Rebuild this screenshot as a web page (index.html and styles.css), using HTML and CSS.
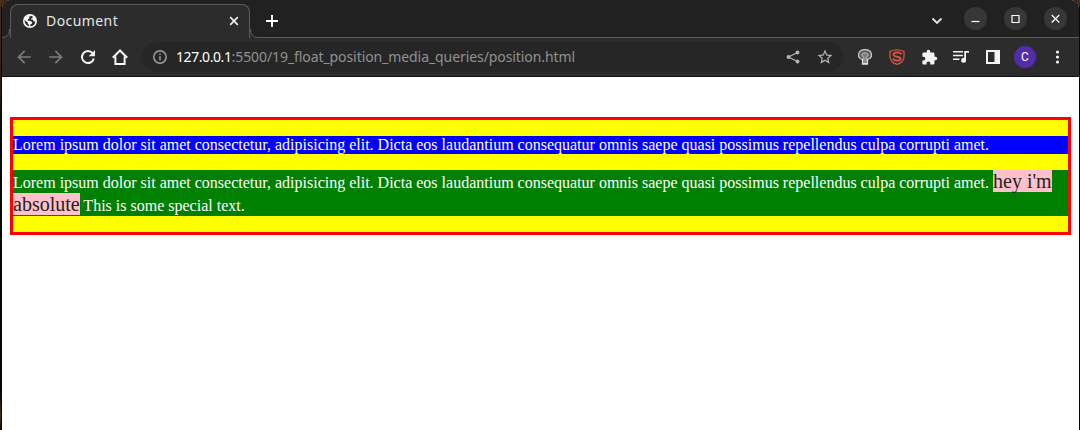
FILE: index.html
```html
<!DOCTYPE html>
<html lang="en">
<head>
<meta charset="utf-8">
<title>Document</title>
<link rel="stylesheet" href="styles.css">
</head>
<body>
<div class="window">
  <header class="tabstrip">
    <svg class="flare" viewBox="0 0 8 38"><path class="flare-fill" d="M0 38V37.500Q7.500 37.500 7.500 29H8V38Z"/><path class="flare-line" d="M0 37.500Q7.500 37.500 7.500 29"/></svg>
    <div class="tab">
      <svg class="globe" viewBox="0 0 14 14"><circle cx="7" cy="7" r="7" fill="#f8f9fa"/><path d="M8 1.800 6 3 6.500 4.300 5 5.500 4.700 6.800 7.600 6.900 9.200 8.200 8.900 9.700 7.600 10 7.200 12.300A5.400 5.400 0 0 0 12.300 7.500L10.600 7.200 9.800 5.600 8 5.600 8.200 4.500 9.600 3.900 9.700 2.400ZM1.700 6.100 4.800 8.700 4.900 10 6 10.700 6 12.300A5.400 5.400 0 0 1 1.700 6.100Z" fill="#2c2c2c"/></svg>
      <span class="tab-title">Document</span>
      <svg class="tab-close" viewBox="0 0 10 10"><path d="M1.200 1.200 8.800 8.800M8.800 1.200 1.200 8.800"/></svg>
    </div>
    <svg class="flare" viewBox="0 0 8 38"><path class="flare-fill" d="M8 38V37.500Q.5 37.500 .5 29H0V38Z"/><path class="flare-line" d="M8 37.500Q.5 37.500 .5 29"/></svg>
    <div class="strip-rest">
      <svg class="new-tab" viewBox="0 0 12 12"><path d="M6 0V12M0 6H12"/></svg>
      <svg class="chevron" viewBox="0 0 12 8"><path d="M1.500 1.500 6 6 10.500 1.500"/></svg>
      <div class="controls">
        <span class="control"><svg viewBox="0 0 23 23"><path d="M7.500 14.500H15.500"/></svg></span>
        <span class="control"><svg viewBox="0 0 23 23"><path d="M8 8.500H15V15.500H8Z"/></svg></span>
        <span class="control"><svg viewBox="0 0 23 23"><path d="M7.700 8 15.300 15.500M15.300 8 7.700 15.500"/></svg></span>
      </div>
    </div>
  </header>
  <nav class="toolbar">
    <span class="cell dim"><svg viewBox="0 0 24 24"><path d="M20 11H7.830l5.590-5.590L12 4l-8 8 8 8 1.410-1.410L7.830 13H20v-2z"/></svg></span>
    <span class="cell dim"><svg viewBox="0 0 24 24"><path d="M12 4l-1.410 1.410L16.170 11H4v2h12.170l-5.580 5.590L12 20l8-8z"/></svg></span>
    <span class="cell"><svg viewBox="0 0 16 16"><path class="stroke" d="M12.600 4.200A6 6 0 1 0 13.800 9.500"/><path d="M15 1V7.300H8.700Z"/></svg></span>
    <span class="cell"><svg viewBox="0 0 16 16"><path class="stroke" d="M3.400 7.500V15H12.600V7.500M.8 8.800 8 1.500 15.200 8.800"/></svg></span>
    <div class="address">
      <svg class="info" viewBox="0 0 14 14"><circle cx="7" cy="7" r="6.200"/><path d="M7 6.200V10.300M7 3.500V5"/></svg>
      <span class="url"><b>127.0.0.1</b>:5500/19_float_position_media_queries/position.html</span>
      <svg class="share" viewBox="0 0 14 14"><path d="M11.500 2.500 2.500 7 11.500 11.500"/><circle cx="11.500" cy="2.500" r="1.900"/><circle cx="2.500" cy="7" r="1.900"/><circle cx="11.500" cy="11.500" r="1.900"/></svg>
      <svg class="star" viewBox="0 0 24 24"><path d="M22 9.240l-7.190-.62L12 2 9.190 8.630 2 9.240l5.460 4.730L5.820 21 12 17.270 18.180 21l-1.630-7.030L22 9.240zM12 15.400l-3.760 2.270 1-4.280-3.320-2.880 4.380-.38L12 6.100l1.710 4.040 4.380.38-3.320 2.880 1 4.280L12 15.400z"/></svg>
    </div>
    <span class="cell ext"><svg viewBox="0 0 16 16"><path d="M5.300 10.500C-.5 8.500 .5 .7 8 .7S16.500 8.500 10.700 10.500Z" fill="#5f5f5f" stroke="#cfcfcf" stroke-width="1.200"/><path d="M6.300 11V7.500C4 7 4.300 4 8 4S12 7 9.700 7.500V11Z" fill="#7a7a7a" stroke="#c4c4c4"/><path d="M4.900 10.200H6.500V14H9.500V10.200H11.100V15.800H4.900Z" fill="#e2e2e2"/><path d="M6.500 8H9.500V14H6.500Z" fill="#8c8c8c"/></svg></span>
    <span class="cell ext"><svg viewBox="0 0 16 16"><path d="M1 2.400Q8-.7 15 2.400V7.500C15 11.500 12 14.200 8 15.400 4 14.200 1 11.500 1 7.500Z" fill="none" stroke="#d65440" stroke-width="1.300"/><path d="M12.600 5.200C11 3 4.500 3 4.500 5.700 4.500 8.400 11.500 6.900 11.500 9.600 11.500 12.400 5.500 12.300 3.600 9.600" fill="none" stroke="#d65440" stroke-width="2"/></svg></span>
    <span class="cell puzzle"><svg viewBox="0 0 24 24"><path d="M20.500 11H19V7c0-1.100-.9-2-2-2h-4V3.500a2.500 2.500 0 0 0-5 0V5H4c-1.100 0-2 .9-2 2v3.800h1.500a2.700 2.700 0 0 1 0 5.400H2V20c0 1.100.9 2 2 2h3.800v-1.500a2.700 2.700 0 0 1 5.400 0V22H17c1.100 0 2-.9 2-2v-4h1.500a2.500 2.500 0 0 0 0-5z"/></svg></span>
    <span class="cell"><svg viewBox="0 0 16 16"><path d="M0 2H10V3.600H0ZM0 5.700H10V7.300H0ZM0 9.400H6.500V11H0ZM11.200 2H16V3.800H13V11.200A2.400 2.400 0 1 1 11.200 9Z"/></svg></span>
    <span class="cell"><svg viewBox="0 0 16 16"><path fill-rule="evenodd" d="M1 1H15V15H1ZM3 3V13H9.500V3Z"/></svg></span>
    <span class="cell"><span class="avatar">C</span></span>
    <span class="cell"><svg viewBox="0 0 16 16"><circle cx="8.500" cy="3" r="1.600"/><circle cx="8.500" cy="8" r="1.600"/><circle cx="8.500" cy="13" r="1.600"/></svg></span>
  </nav>
  <main class="page">
    <div class="box">
      <p class="first">Lorem ipsum dolor sit amet consectetur, adipisicing elit. Dicta eos laudantium consequatur omnis saepe quasi possimus repellendus culpa corrupti amet.</p>
      <p class="second">Lorem ipsum dolor sit amet consectetur, adipisicing elit. Dicta eos laudantium consequatur omnis saepe quasi possimus repellendus culpa corrupti amet. <span class="special">hey i'm absolute</span> This is some special text.</p>
    </div>
  </main>
</div>
</body>
</html>
```
FILE: styles.css
```css
* { box-sizing: border-box; }
body {
  margin: 0;
  height: 430px;
  padding: 0 1px 0 2px;
  overflow: hidden;
  background: linear-gradient(#4a2f1c, #2b1c12 90px, #090808 130px, #090808 395px, #50301a 415px, #100b08);
}
svg { display: block; flex: none; }
.window {
  height: 430px;
  display: flex;
  flex-direction: column;
  background: #fff;
  border-radius: 8px 8px 0 0;
  overflow: hidden;
  box-shadow: 0 0 0 1px #080808;
}
.tabstrip { display: flex; height: 38px; background: #212121; }
.flare { width: 8px; height: 38px; }
.flare-fill { fill: #2c2c2c; }
.flare-line { fill: none; stroke: #5c5c5c; }
.tab {
  width: 240px;
  margin-top: 4px;
  padding: 0 10px 0 12px;
  display: flex;
  align-items: center;
  background: #2c2c2c;
  border: 1px solid #5c5c5c;
  border-bottom: 0;
  border-radius: 8px 8px 0 0;
}
.globe { width: 14px; height: 14px; margin-top: -1px; }
.tab-title {
  margin: -2px 0 0 9px;
  flex: 1;
  font: 14px/20px "Noto Sans", sans-serif;
  letter-spacing: .42px;
  color: #e6e6e6;
}
.tab-close { width: 10px; height: 10px; margin-top: -1px; fill: none; stroke: #eee; stroke-width: 1.7; }
.strip-rest {
  flex: 1;
  display: flex;
  align-items: center;
  padding: 0 12px 0 8px;
  border-bottom: 1px solid #5c5c5c;
}
.new-tab { width: 12px; height: 12px; margin-top: 5px; fill: none; stroke: #fff; stroke-width: 2; }
.chevron { width: 12px; height: 8px; margin: 5px 21px 0 auto; fill: none; stroke: #e4e4e4; stroke-width: 1.8; }
.controls { display: flex; gap: 17px; height: 23px; margin-top: -1px; }
.control { width: 23px; height: 23px; border-radius: 50%; background: #373737; }
.control svg { width: 23px; height: 23px; fill: none; stroke: #fff; stroke-width: 1.2; }
.toolbar {
  display: flex;
  align-items: center;
  height: 39px;
  padding: 0 6px;
  background: #2c2c2c;
  border-bottom: 1px solid #111;
}
.cell { width: 32px; height: 32px; display: flex; align-items: center; justify-content: center; }
.cell svg { width: 16px; height: 16px; fill: #f5f5f5; }
.cell.dim svg { width: 20px; height: 20px; fill: #7c7c7c; }
.cell .stroke { fill: none; stroke: #f5f5f5; stroke-width: 2; }
.cell.puzzle svg { width: 17px; height: 17px; }
.cell.ext svg { width: 16px; height: 16px; }
.address {
  flex: 1;
  height: 30px;
  margin: 0 6px;
  padding: 0 9px 0 11px;
  display: flex;
  align-items: center;
  background: #262626;
  border-radius: 15px;
}
.info { width: 14px; height: 14px; fill: none; stroke: #989da2; stroke-width: 1.5; }
.url {
  margin-left: 9px;
  flex: 1;
  white-space: nowrap;
  font: 14px/20px "Noto Sans", sans-serif;
  letter-spacing: -.08px;
  color: #929292;
}
.url b { font-weight: 400; letter-spacing: -.42px; color: #fff; }
.share { width: 14px; height: 14px; margin-right: 16px; fill: #b5b5b5; stroke: #b5b5b5; stroke-width: 1.2; }
.share path { fill: none; }
.share circle { stroke: none; }
.star { width: 18px; height: 18px; fill: #b5b5b5; }
.avatar {
  width: 22px;
  height: 22px;
  border-radius: 50%;
  background: #512da8;
  color: #fff;
  font: 12px/22px Roboto, sans-serif;
  text-align: center;
}
.page {
  flex: 1;
  padding: 40px 8px 0;
  font: 16px "Liberation Serif", serif;
}
.box { height: 118px; border: 3px solid red; background: yellow; overflow: hidden; }
.box p { margin: 16px 0; color: #fff; }
.first { background: blue; }
.second { background: green; }
.special { font-size: 20px; background: pink; color: #222; }
```
